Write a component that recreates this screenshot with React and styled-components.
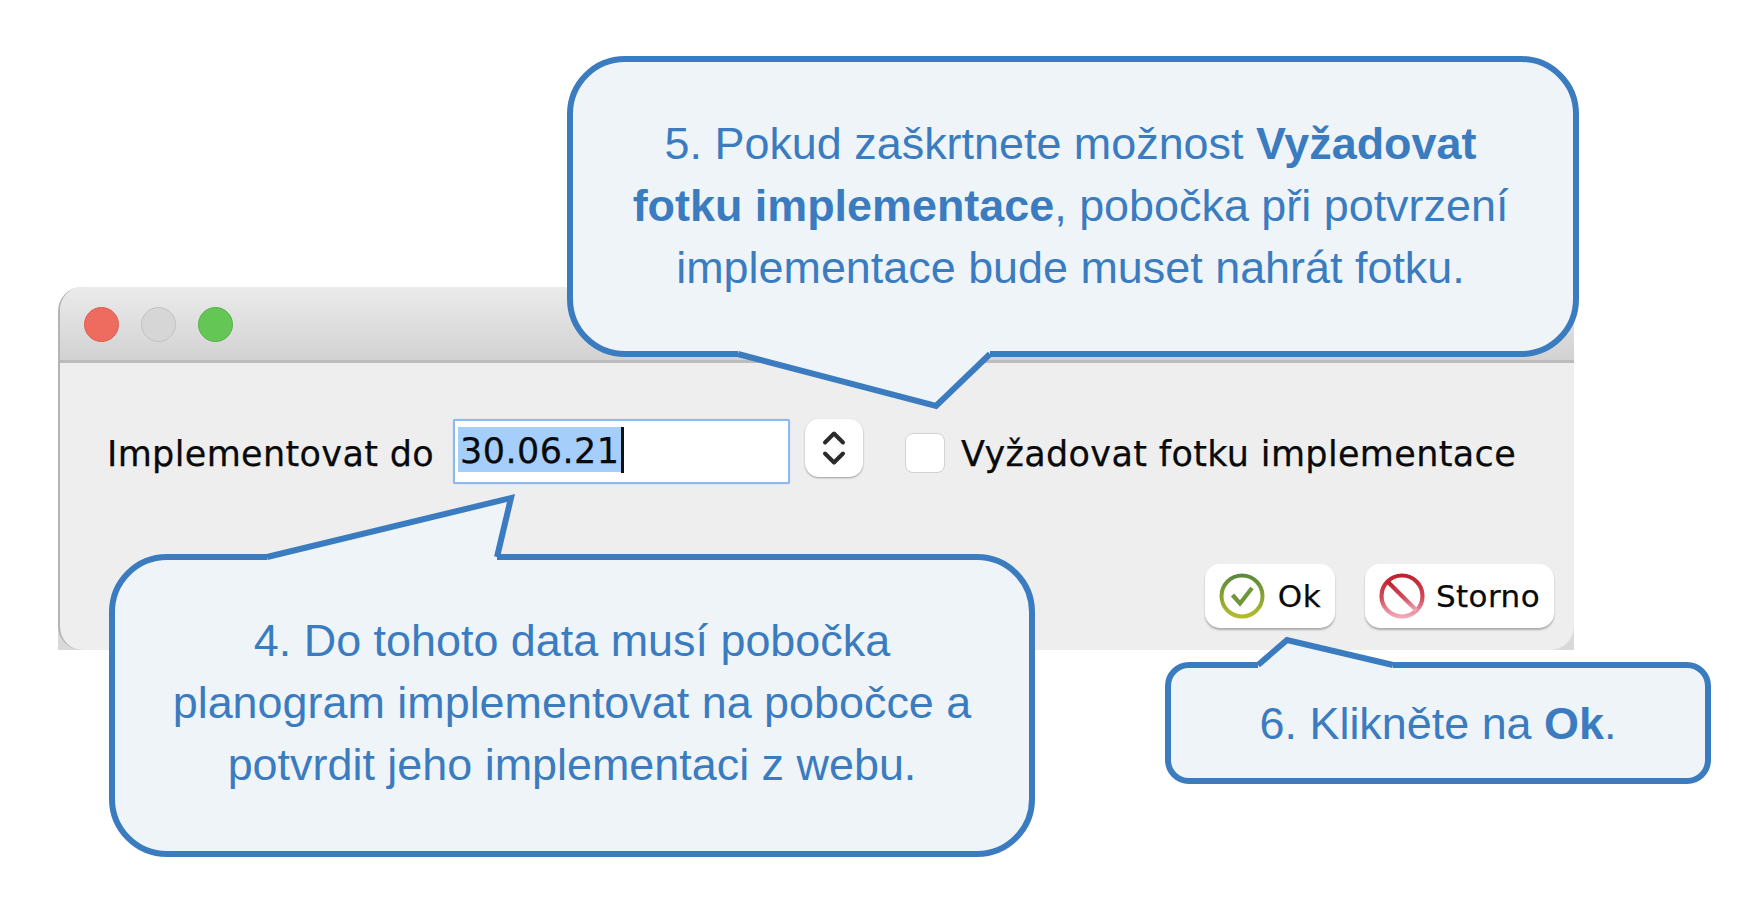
import styled, { createGlobalStyle } from "styled-components";

const GlobalStyle = createGlobalStyle`
    html, body {
        margin: 0;
        padding: 0;
        background: #fff;
    }
`;

const Page = styled.div`
    position: relative;
    width: 1754px;
    height: 922px;
    padding: 287px 0 0 58px;
    box-sizing: border-box;
    overflow: hidden;
`;

const WindowCorners = styled.div`
    width: 1516px;
    height: 363px;
    background: linear-gradient(#fff 50%, #d9d9d9 50%);
`;

const Window = styled.div`
    height: 100%;
    display: flex;
    flex-direction: column;
    box-sizing: border-box;
    border-left: 2px solid #b4b4b4;
    border-radius: 24px;
    overflow: hidden;
    background: #eee;
    font-family: "DejaVu Sans", sans-serif;
    color: #0a0a0a;
    -webkit-text-stroke: 0.25px #0a0a0a;
`;

const TitleBar = styled.div`
    height: 76px;
    flex-shrink: 0;
    box-sizing: border-box;
    display: flex;
    align-items: center;
    gap: 22px;
    padding: 2px 0 0 24px;
    background: linear-gradient(#ebebeb, #d2d2d2);
    border-bottom: 3px solid #bcbcbc;
`;

const TrafficLight = styled.span`
    width: 35px;
    height: 35px;
    box-sizing: border-box;
    border-radius: 50%;
    background: ${({ $bg }) => $bg};
    border: 1.5px solid ${({ $line }) => $line};
`;

const FormBody = styled.div`
    flex: 1;
    display: flex;
    flex-direction: column;
    justify-content: space-between;
    padding: 56px 20px 22px 47px;
`;

const FieldRow = styled.div`
    display: flex;
    align-items: flex-start;
    height: 65px;
`;

const Label = styled.span`
    font-size: 35px;
    line-height: 70px;
    letter-spacing: 0.35px;
    white-space: nowrap;
`;

const DateField = styled.div`
    width: 337px;
    height: 65px;
    margin-left: 19px;
    box-sizing: border-box;
    padding: 6px 0 0 3px;
    display: flex;
    align-items: flex-start;
    background: #fff;
    border: 2px solid #8cb9ee;
    border-radius: 2px;
    box-shadow: 0 0 1px #8cb9ee;
`;

const SelectedText = styled.span`
    font-size: 35px;
    line-height: 49px;
    height: 45px;
    padding: 0 1px 0 2px;
    background: #a6cefa;
    letter-spacing: 0.45px;
`;

const Caret = styled.span`
    width: 3px;
    height: 46px;
    background: #111;
`;

const Spinner = styled.div`
    width: 58px;
    height: 58px;
    margin-left: 15px;
    display: flex;
    align-items: center;
    justify-content: center;
    background: #fff;
    border-radius: 14px;
    box-shadow: 0 1px 2px rgba(0, 0, 0, 0.35);
`;

const CheckBox = styled.div`
    width: 40px;
    height: 40px;
    margin: 14px 16px 0 42px;
    box-sizing: border-box;
    background: #fff;
    border: 1px solid #d2d2d2;
    border-radius: 8px;
`;

const ButtonRow = styled.div`
    display: flex;
    justify-content: flex-end;
    gap: 30px;
`;

const DialogButton = styled.div`
    height: 64px;
    box-sizing: border-box;
    display: flex;
    align-items: center;
    gap: ${({ $gap }) => $gap}px;
    padding: 0 14px;
    background: #fff;
    border-radius: 15px;
    box-shadow: 0 2px 2px rgba(0, 0, 0, 0.28);
    font-size: 31px;
    letter-spacing: 0.4px;
`;

const Callout = styled.div`
    position: absolute;
    left: ${({ $x }) => $x}px;
    top: ${({ $y }) => $y}px;
    width: ${({ $w }) => $w}px;
    height: ${({ $h }) => $h}px;
    box-sizing: border-box;
    display: flex;
    align-items: center;
    justify-content: center;
    background: #eff4f9;
    border: 6px solid #3a7cbf;
    border-radius: ${({ $r }) => $r}px;
    font-family: "Liberation Sans", Arial, sans-serif;
    font-size: 44.9px;
    line-height: 62px;
    color: #3a7cbf;
    text-align: center;
    white-space: nowrap;
`;

const CalloutText = styled.div`
    position: relative;
    margin-top: ${({ $lift }) => -$lift}px;
    margin-left: ${({ $shift }) => $shift || 0}px;
`;

const TailSvg = styled.svg`
    position: absolute;
    left: -6px;
    top: -6px;
    width: ${({ $w }) => $w}px;
    height: ${({ $h }) => $h}px;
    overflow: visible;
`;

// a, tip and b are in the callout's own coordinates, the tail replaces the border between a and b
const Tail = ({ w, h, a, tip, b, bottom }) => {
    const edge = bottom ? h - 3 : 3;
    const inner = bottom ? h - 7 : 7;
    return (
        <TailSvg $w={w} $h={h} viewBox={`0 0 ${w} ${h}`}>
            <polygon
                points={`${a},${inner} ${a},${edge} ${tip[0]},${tip[1]} ${b},${edge} ${b},${inner}`}
                fill="#eff4f9"
            />
            <polyline
                points={`${a},${edge} ${tip[0]},${tip[1]} ${b},${edge}`}
                fill="none"
                stroke="#3a7cbf"
                strokeWidth="6"
            />
        </TailSvg>
    );
};

const OkIcon = () => (
    <svg width="46" height="46" viewBox="0 0 46 46">
        <defs>
            <linearGradient id="okRing" x1="0" y1="0" x2="0" y2="1">
                <stop offset="0" stopColor="#5b8a3c" />
                <stop offset="1" stopColor="#b2bb2c" />
            </linearGradient>
        </defs>
        <circle cx="23" cy="23" r="20.5" fill="#fff" stroke="url(#okRing)" strokeWidth="4" />
        <path d="M13.5 22 L21 30.5 L33 15" fill="none" stroke="#6f9638" strokeWidth="4.2" />
    </svg>
);

const StopIcon = () => (
    <svg width="46" height="46" viewBox="0 0 46 46">
        <defs>
            <linearGradient id="stopRing" x1="0" y1="0" x2="0" y2="1">
                <stop offset="0" stopColor="#c0202f" />
                <stop offset="0.55" stopColor="#d24a5a" />
                <stop offset="1" stopColor="#f2a9b6" />
            </linearGradient>
        </defs>
        <circle cx="23" cy="23" r="20.5" fill="#fff" stroke="url(#stopRing)" strokeWidth="4.2" />
        <path d="M8.5 8.5 L37.5 37.5" stroke="url(#stopRing)" strokeWidth="4.2" />
    </svg>
);

const SpinnerIcon = () => (
    <svg width="24" height="36" viewBox="0 0 24 36">
        <path
            d="M3 12.5 L12 3.5 L21 12.5 M3 23.5 L12 32.5 L21 23.5"
            fill="none"
            stroke="#2b2b2b"
            strokeWidth="4"
            strokeLinecap="round"
            strokeLinejoin="round"
        />
    </svg>
);

export default function App() {
    return (
        <Page>
            <GlobalStyle />
            <WindowCorners>
                <Window>
                    <TitleBar>
                        <TrafficLight $bg="#ee6b60" $line="#dd5d52" />
                        <TrafficLight $bg="#d6d6d6" $line="#c0c0c0" />
                        <TrafficLight $bg="#64c655" $line="#55b247" />
                    </TitleBar>
                    <FormBody>
                        <FieldRow>
                            <Label>Implementovat do</Label>
                            <DateField>
                                <SelectedText>30.06.21</SelectedText>
                                <Caret />
                            </DateField>
                            <Spinner>
                                <SpinnerIcon />
                            </Spinner>
                            <CheckBox />
                            <Label>Vyžadovat fotku implementace</Label>
                        </FieldRow>
                        <ButtonRow>
                            <DialogButton $gap={13}>
                                <OkIcon />
                                Ok
                            </DialogButton>
                            <DialogButton $gap={11}>
                                <StopIcon />
                                Storno
                            </DialogButton>
                        </ButtonRow>
                    </FormBody>
                </Window>
            </WindowCorners>

            <Callout $x={567} $y={56} $w={1012} $h={301} $r={58}>
                <Tail w={1012} h={301} a={171} tip={[369, 350]} b={423} bottom />
                <CalloutText $lift={2} $shift={-5}>
                    5. Pokud zaškrtnete možnost <b>Vyžadovat</b>
                    <br />
                    <b>fotku implementace</b>, pobočka při potvrzení
                    <br />
                    implementace bude muset nahrát fotku.
                </CalloutText>
            </Callout>

            <Callout $x={109} $y={554} $w={926} $h={303} $r={58}>
                <Tail w={926} h={303} a={158} tip={[402, -56]} b={388} />
                <CalloutText $lift={6}>
                    4. Do tohoto data musí pobočka
                    <br />
                    planogram implementovat na pobočce a
                    <br />
                    potvrdit jeho implementaci z webu.
                </CalloutText>
            </Callout>

            <Callout $x={1165} $y={662} $w={546} $h={122} $r={24}>
                <Tail w={546} h={122} a={93} tip={[122, -22]} b={228} />
                <CalloutText $lift={-2}>
                    6. Klikněte na <b>Ok</b>.
                </CalloutText>
            </Callout>
        </Page>
    );
}
